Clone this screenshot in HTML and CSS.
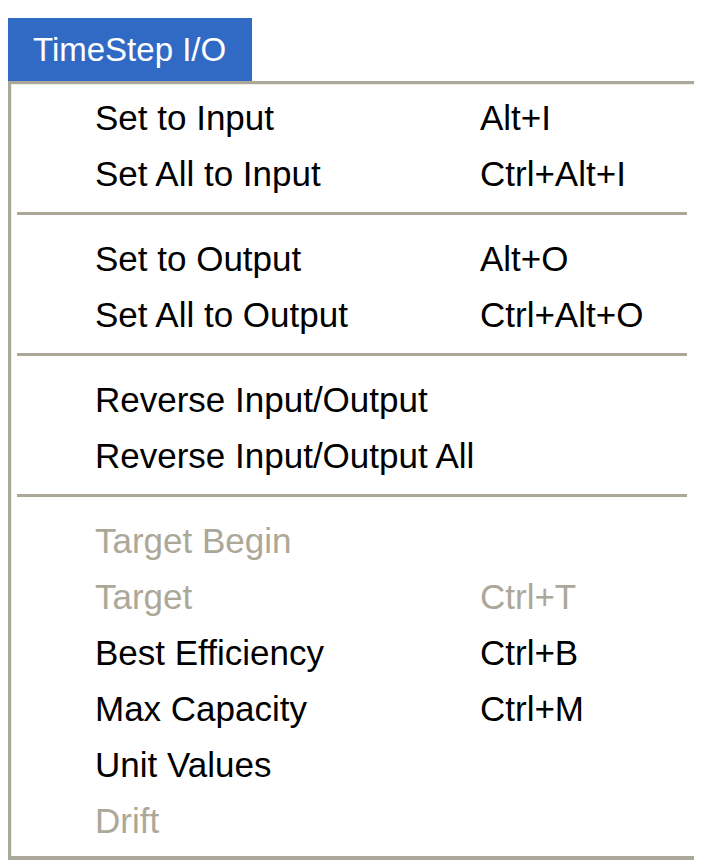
FILE: index.html
```html
<!DOCTYPE html>
<html lang="en">
  <head>
    <meta charset="utf-8" />
    <title>TimeStep I/O</title>
    <meta name="viewport" content="width=device-width, initial-scale=1" />
    <link rel="stylesheet" href="styles.css">
  </head>
  <body>
    <div class="menubar">
      <div class="menu-title">TimeStep I/O</div>
    </div>
    <ul class="menu">
      <li class="item"><span>Set to Input</span><span>Alt+I</span></li>
      <li class="item"><span>Set All to Input</span><span>Ctrl+Alt+I</span></li>
      <li class="sep"></li>
      <li class="item"><span>Set to Output</span><span>Alt+O</span></li>
      <li class="item"><span>Set All to Output</span><span>Ctrl+Alt+O</span></li>
      <li class="sep"></li>
      <li class="item"><span>Reverse Input/Output</span><span></span></li>
      <li class="item"><span>Reverse Input/Output All</span><span></span></li>
      <li class="sep"></li>
      <li class="item disabled"><span>Target Begin</span><span></span></li>
      <li class="item disabled"><span>Target</span><span>Ctrl+T</span></li>
      <li class="item"><span>Best Efficiency</span><span>Ctrl+B</span></li>
      <li class="item"><span>Max Capacity</span><span>Ctrl+M</span></li>
      <li class="item"><span>Unit Values</span><span></span></li>
      <li class="item disabled"><span>Drift</span><span></span></li>
    </ul>
  </body>
</html>
```

FILE: styles.css
```css
html {
  font-family: "Liberation Sans", Arial, sans-serif;
  font-size: 35px;
}

body {
  margin: 0;
  background-color: white;
  color: black;
}

.menubar {
  padding: 18px 0 0 8px;
}

.menu-title {
  box-sizing: border-box;
  width: 244px;
  height: 63px;
  padding-left: 25px;
  font-size: 33px;
  line-height: 63px;
  background-color: #316ac5;
  color: white;
}

.menu {
  list-style: none;
  box-sizing: border-box;
  width: 686px;
  margin: 0 0 0 8px;
  padding: 6px 0 7px;
  border: solid #aca899;
  border-width: 3px 0 4px 3px;
  box-shadow: inset 1px 1px 0 #f1efe2;
}

.menu .item {
  display: grid;
  grid-template-columns: 385px 1fr;
  height: 56px;
  line-height: 56px;
  padding-left: 84px;
  white-space: nowrap;
}

.menu .item.disabled {
  color: #aca899;
}

.menu .sep {
  height: 3px;
  margin: 10px 7px 16px 6px;
  background-color: #aca899;
}
```
